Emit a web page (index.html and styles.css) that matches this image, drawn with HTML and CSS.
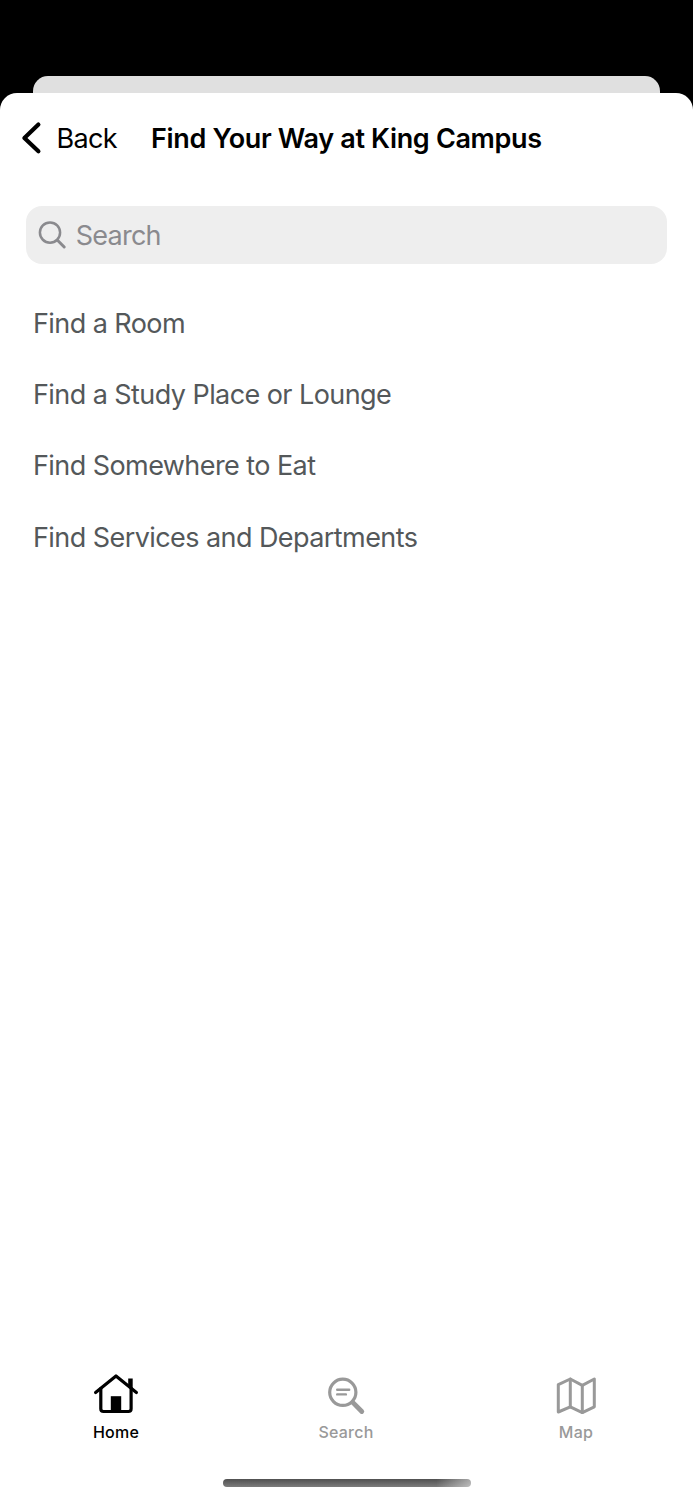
FILE: index.html
```html
<!DOCTYPE html>
<html lang="en">
<head>
    <meta charset="UTF-8">
    <meta name="viewport" content="width=device-width, initial-scale=1.0">
    <title>Find Your Way at King Campus</title>
    <link rel="stylesheet" href="styles.css">
</head>
<body>
    <div class="screen">
        <div class="card-behind"></div>
        <div class="sheet">
            <header class="header">
                <a class="back">
                    <svg class="back-icon" width="24" height="36" viewBox="0 0 24 36">
                        <path d="M18.4 4.6 L4.4 18 L18.4 31.2" />
                    </svg>
                    <span>Back</span>
                </a>
                <h1>Find Your Way at King Campus</h1>
            </header>

            <div class="search-box">
                <svg class="search-icon" width="30" height="30" viewBox="0 0 30 30">
                    <circle cx="12" cy="12.6" r="10.1" />
                    <path class="handle" d="M19.5 20.3 L26.2 27" />
                </svg>
                <span>Search</span>
            </div>

            <ul class="list">
                <li>Find a Room</li>
                <li>Find a Study Place or Lounge</li>
                <li>Find Somewhere to Eat</li>
                <li>Find Services and Departments</li>
            </ul>

            <nav class="tabs">
                <a class="tab active">
                    <svg width="48" height="48" viewBox="0 0 48 48">
                        <path d="M3.6 22.5 L24 6 L44.4 22.5" />
                        <path d="M8.8 18.5 V38.7 Q8.8 41.5 11.6 41.5 H36.3 Q39.1 41.5 39.1 38.7 V18.5" />
                        <path class="fill" d="M36.2 8.5 H40.7 V20 L36.2 16 Z" />
                        <rect class="fill" x="18.8" y="26.2" width="10.4" height="15" />
                    </svg>
                    <span>Home</span>
                </a>
                <a class="tab">
                    <svg width="48" height="48" viewBox="0 0 48 48">
                        <circle cx="20.8" cy="22.3" r="13.1" />
                        <path class="line" d="M15.2 19.8 H27.2 M15.2 24.4 H23.9" />
                        <path class="handle" d="M31 32.6 L39.8 41.5" />
                    </svg>
                    <span>Search</span>
                </a>
                <a class="tab">
                    <svg class="map-icon" width="48" height="48" viewBox="0 0 48 48">
                        <path d="M6.3 14.6 L18.3 9 L30.3 15.3 L42.3 9 V36.8 L30.3 42.6 L18.3 36.8 L6.3 42 Z" />
                        <path d="M18.3 9 V36.8 M30.3 15.3 V42.6" />
                    </svg>
                    <span>Map</span>
                </a>
            </nav>
            <div class="home-bar"></div>
        </div>
    </div>
</body>
</html>
```
FILE: styles.css
```css
* {
    margin: 0;
    padding: 0;
    box-sizing: border-box;
}

body {
    background-color: #000;
    font-family: Inter, "Liberation Sans", sans-serif;
    font-size: 27px;
}

svg {
    fill: none;
    stroke: currentColor;
    stroke-linecap: round;
    stroke-linejoin: round;
}

.screen {
    height: 1500px;
    padding-top: 76px;
    display: flex;
    flex-direction: column;
    overflow: hidden;
}

.card-behind {
    height: 17px;
    margin: 0 33px;
    border-radius: 15px 15px 0 0;
    background-color: #e0e0e0;
}

.sheet {
    flex: 1;
    display: flex;
    flex-direction: column;
    background-color: #fff;
    border-radius: 17px 17px 0 0;
}

.header {
    height: 90px;
    padding-left: 20px;
    display: flex;
    align-items: center;
    color: #000;
}

.back {
    display: flex;
    align-items: center;
    width: 131px;
    gap: 12.5px;
    letter-spacing: -0.7px;
}

.back-icon {
    stroke-width: 4.2;
}

.header h1 {
    font-size: 27px;
    font-weight: 600;
    letter-spacing: -0.34px;
    white-space: nowrap;
}

.search-box {
    height: 58px;
    margin: 23px 26px 0;
    padding-left: 12px;
    display: flex;
    align-items: center;
    gap: 7.7px;
    border-radius: 16px;
    background-color: #eee;
    color: #8a8a8e;
    letter-spacing: -0.75px;
}

.search-icon {
    stroke-width: 2.5;
}

.search-icon .handle {
    stroke-width: 3;
}

.list {
    margin-top: 24px;
    padding-left: 33px;
    list-style: none;
    color: #54585a;
    letter-spacing: -0.57px;
}

.list li {
    height: 71.2px;
    line-height: 71.2px;
}

.tabs {
    width: 690px;
    margin-top: auto;
    margin-left: 1px;
    display: flex;
}

.tab {
    flex: 1;
    display: flex;
    flex-direction: column;
    align-items: center;
    gap: 4px;
    color: #999;
    font-size: 16px;
    font-weight: 500;
    line-height: 20px;
    letter-spacing: 0.25px;
}

.tab svg {
    stroke-width: 3.2;
}

.tab .line {
    stroke-width: 2.4;
}

.tab .handle {
    stroke-width: 4.8;
}

.tab .fill {
    fill: currentColor;
    stroke: none;
}

.tab .map-icon {
    stroke-width: 3;
}

.active {
    color: #000;
}

.home-bar {
    width: 248px;
    height: 8px;
    margin: 37px auto 13px 223px;
    border-radius: 4px;
    background: linear-gradient(to right, transparent 86%, rgba(255, 255, 255, 0.5)), linear-gradient(#505050, #7c7c7c);
}
```
